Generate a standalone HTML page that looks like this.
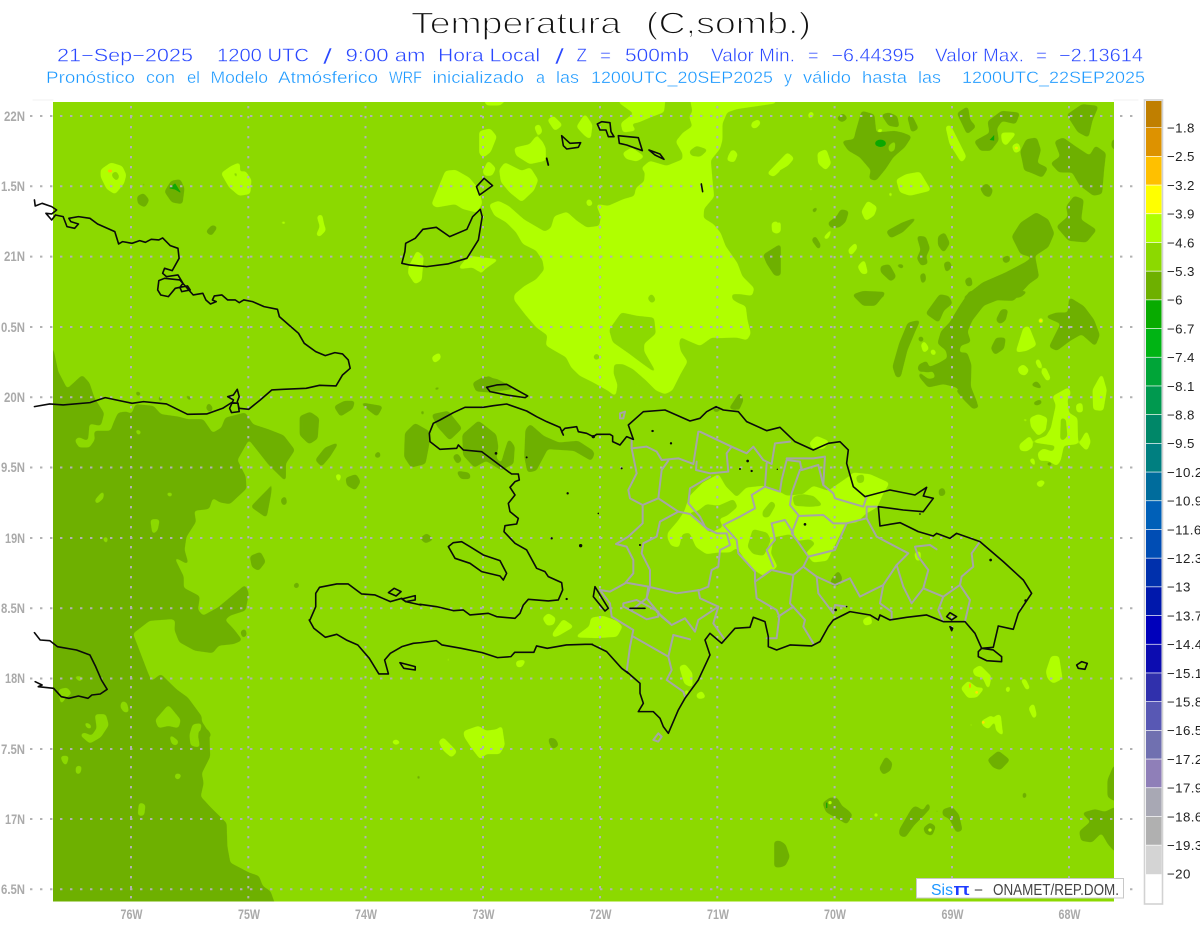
<!DOCTYPE html>
<html><head><meta charset="utf-8"><title>Temperatura</title>
<style>
html,body{margin:0;padding:0;background:#fff;width:1200px;height:927px;overflow:hidden}
svg{display:block}
path{vector-effect:non-scaling-stroke;stroke-linejoin:round;stroke-linecap:round}
.d path{fill:#6eb000;stroke:#6eb000;stroke-width:1.2}
.m path{fill:#8cd900;stroke:#8cd900;stroke-width:1.2}
.l path{fill:#b0ff00;stroke:#b0ff00;stroke-width:1.2}
.c path{fill:none;stroke:#0a0a0a;stroke-width:1.6}
.p path{fill:none;stroke:#a6a6a6;stroke-width:2}
.g path{stroke-linecap:butt}
text{font-family:"Liberation Sans",sans-serif;white-space:pre}
.t1 text{font-size:18px;fill:#2a48ff;stroke:#fff;stroke-width:.4}
.t2 text{font-size:17px;fill:#1a98ff;stroke:#fff;stroke-width:.35}
.tt text{font-size:31px;fill:#111;stroke:#fff;stroke-width:1.15}
.ax text{font-size:13.5px;fill:#aaa;font-weight:bold}
.cb text{font-size:13.3px;fill:#222;letter-spacing:.4px}
</style></head><body>
<svg width="1200" height="927" viewBox="0 0 1200 927" xmlns="http://www.w3.org/2000/svg">
<defs>
<clipPath id="mc"><rect x="53" y="102" width="1061" height="799.5"/></clipPath>
<filter id="s" filterUnits="userSpaceOnUse" x="0" y="0" width="1200" height="927" color-interpolation-filters="sRGB">
<feGaussianBlur stdDeviation="1.5"/>
<feColorMatrix type="matrix" values="1 0 0 0 0 0 1 0 0 0 0 0 1 0 0 0 0 0 7 -2.6"/>
</filter>
</defs>
<rect width="1200" height="927" fill="#fff"/>
<path d="M33 100H53M1114 100H1138" stroke="#f0f0f0" stroke-width="1"/>
<rect x="53" y="102" width="1061" height="799.5" fill="#8cd900"/>
<g clip-path="url(#mc)">

<!-- west dark -->
<g filter="url(#s)"><g class="d" transform="translate(0,300) scale(.3827 .3333)">
<path d="M120,120 139,155 150,215 175,270 215,228 232,250 245,295 270,340 262,375 232,368 228,420 205,408 192,420 205,445 235,445 250,420 248,395 290,395 300,365 310,340 330,337 345,345 355,315 400,320 420,345 465,352 490,360 530,360 555,402 580,385 590,355 640,340 660,375 700,390 740,408 768,450 745,490 745,540 705,495 650,415 618,480 640,530 642,565 600,610 575,605 555,590 545,625 505,630 510,665 485,710 480,750 490,790 450,765 478,830 478,865 520,890 515,930 530,950 570,925 640,858 648,880 640,930 600,945 585,960 610,990 630,1020 610,1030 570,1035 555,1057 510,1050 470,1025 458,990 460,960 450,955 390,960 345,1000 385,1120 395,1147 420,1125 460,1170 490,1195 525,1250 525,1265 545,1300 547,1370 525,1420 530,1450 522,1490 550,1525 590,1570 592,1640 600,1690 650,1720 675,1730 685,1760 705,1775 725,1840 120,1840z"/>
</g></g>
<!-- mid patches over dark -->
<g filter="url(#s)"><g class="m" transform="translate(0,620) scale(.3827 .3333)">
<path d="M408,300 440,258 470,300 465,322 440,315 415,322z"/>
<path d="M320,245 330,250 335,275 325,275 316,260z"/>
<path d="M250,285 275,285 282,315 262,350 235,368 212,345 220,340 240,350 255,325z"/>
<path d="M222,308 235,315 238,325 228,322z"/>
<path d="M445,347 465,365 460,375 450,370z"/>
<path d="M505,315 525,312 522,330 515,345 520,380 500,375 497,345z"/>
<path d="M160,410 178,410 172,435 165,425z"/>
<path d="M200,440 212,440 208,460 200,460z"/>
<path d="M460,462 473,465 465,478 458,472z"/>
<path d="M365,550 378,555 375,585 362,585z"/>
<path d="M155,210 175,205 185,220 170,232 160,250z"/>
<path d="M195,170 215,172 210,183z"/>
</g></g>
<g filter="url(#s)"><g class="m" transform="translate(0,300) scale(.3827 .3333)">
<path d="M250,600 270,575 268,595 252,610z"/>
<path d="M435,580 450,580 445,590z"/>
<path d="M395,660 415,660 410,690 400,700z"/>
<path d="M270,715 280,712 278,730z"/>
<path d="M355,390 368,395 362,405z"/>
</g></g>
<g filter="url(#s)"><g class="d" transform="translate(0,620) scale(.3827 .3333)">
<path d="M520,335 540,328 550,345 535,365 522,355z"/>
<path d="M630,35 640,28 643,45 635,52z"/>
<path d="M1435,355 1450,358 1458,375 1445,385 1437,370z"/>
<path d="M1090,468 1097,468 1094,480z"/>
</g></g>
<!-- central Caribbean dark blobs -->
<g filter="url(#s)"><g class="d" transform="translate(0,300) scale(.3827 .3333)">
<path d="M875,320 900,305 925,305 920,325 890,347z"/>
<path d="M945,310 998,320 985,347 965,330z"/>
<path d="M785,350 810,338 832,355 828,415 808,430 785,405z"/>
<path d="M826,480 850,445 882,430 860,470 840,497z"/>
<path d="M980,465 990,455 993,470 983,472z"/>
<path d="M905,535 930,525 940,545 928,568 908,555z"/>
<path d="M735,600 745,590 748,610 740,615z"/>
<path d="M658,620 705,565 710,550 705,590 695,650z"/>
<path d="M655,770 680,758 692,785 675,810 660,800z"/>
<path d="M768,855 778,848 780,860 772,864z"/>
<path d="M1100,715 1115,702 1130,718 1112,728z"/>
<path d="M1060,400 1085,372 1120,395 1120,430 1110,490 1075,500 1058,470z"/>
<path d="M1130,345 1170,335 1205,385 1175,418 1145,380z"/>
<path d="M1210,405 1250,365 1295,405 1300,440 1295,475 1310,495 1320,455 1330,420 1343,440 1340,490 1310,508 1270,480 1240,500 1212,465z"/>
<path d="M1185,470 1195,462 1205,480 1195,490z"/>
<path d="M1195,515 1225,520 1228,535 1205,535z"/>
<path d="M1375,390 1385,375 1420,410 1460,430 1510,425 1550,455 1545,480 1500,450 1430,445 1400,510 1380,515 1372,470z"/>
<path d="M1237,250 1265,232 1300,240 1340,265 1280,275 1245,272z"/>
<path d="M355,275 368,280 360,288z"/>
<path d="M415,295 425,285 420,305z"/>
<path d="M485,285 500,295 495,300z"/>
<path d="M545,310 555,325 548,335 540,325z"/>
<path d="M1100,335 1107,332 1105,347z"/>
<path d="M1135,265 1150,262 1140,270z"/>
</g></g>
<!-- north-west patches -->
<g filter="url(#s)"><g class="d" transform="scale(.3827 .3333)">
<path d="M432,575 448,545 470,540 480,565 475,610 450,605z"/>
<path d="M360,590 375,582 388,600 378,620 362,610z"/>
<path d="M540,695 555,677 566,682 552,705z"/>
<path d="M372,552 378,550 376,560z"/>
</g></g>
<path d="M170,188 175,184 180,192 175,189z" fill="#14a800" stroke="#14a800"/>
<g filter="url(#s)"><g class="l" transform="scale(.3827 .3333)">
<path fill-rule="evenodd" d="M265,510 290,490 318,500 328,525 322,550 300,580 280,565 265,530z M290,518 290,530 305,548 315,530 305,510z"/>
<path fill-rule="evenodd" d="M580,520 605,500 625,490 625,520 640,515 655,540 652,580 625,585 600,560z M605,515 612,530 622,545 622,515z"/>
<path d="M830,650 840,645 845,675 850,690 835,708 828,705 838,680z"/>
<path d="M733,668 745,665 745,672z"/>
<path d="M1130,612 1165,515 1190,512 1225,535 1250,570 1258,610 1245,635 1210,625 1190,610 1140,620z"/>
<path d="M1070,800 1090,755 1105,770 1100,840 1085,850 1068,820z"/>
<path d="M1200,805 1225,770 1300,780 1265,800 1255,815 1235,800z"/>
</g></g>
<ellipse cx="110" cy="171" rx="2" ry="1.5" fill="#ffc000"/>

<!-- big lime -->
<g filter="url(#s)"><g class="l" transform="translate(480,100) scale(.3333)">
<path d="M885,-15 885,8 770,25 740,35 725,70 725,120 718,145 690,180 695,240 700,290 670,325 668,355 700,375 720,400 735,440 770,490 785,530 820,565 815,585 780,580 752,580 755,600 775,612 795,620 800,660 810,700 800,718 770,710 720,712 695,710 660,735 625,720 600,708 595,730 600,755 620,785 600,820 575,870 555,880 530,870 500,840 460,805 430,790 400,790 398,820 410,855 405,885 385,870 340,845 300,825 275,800 260,770 225,750 200,735 205,705 170,680 140,645 105,600 105,585 135,560 170,540 195,510 190,480 170,450 130,430 110,395 80,365 45,345 30,315 55,305 85,320 130,360 195,398 215,385 225,350 260,338 290,365 320,385 360,380 365,350 352,315 385,320 430,300 465,290 470,265 495,245 497,215 487,205 510,185 560,200 610,180 610,160 590,125 610,100 640,80 630,50 640,35 630,-15z"/>
<path d="M420,-15 555,-15 550,35 510,50 475,65 450,70 465,90 430,95 425,70 465,40 420,8z"/>
<path d="M10,-15 90,-15 60,14 20,14z"/>
<path d="M0,95 30,88 48,110 30,155 10,170 0,160z"/>
<path d="M105,145 150,135 170,110 185,125 195,145 195,180 150,190 110,165z"/>
<path d="M165,80 178,75 185,95 175,105z"/>
<path d="M205,60 220,50 245,75 225,90z"/>
<path d="M292,80 315,45 335,75 330,115 315,105z"/>
<path d="M10,215 25,185 45,205 35,225 15,225z"/>
<path d="M60,210 75,190 125,215 150,205 172,240 160,270 125,303 90,275 65,245z"/>
<path d="M320,305 328,298 337,312 325,318z"/>
<path d="M430,160 455,145 490,170 470,182 440,175z"/>
<path d="M745,170 760,150 772,165 755,185z"/>
<path d="M815,70 835,60 840,70 825,85z"/>
<path d="M865,220 895,190 900,210 880,228z"/>
<path d="M0,478 50,480 15,505 0,520z"/>
<path d="M880,385 900,365 900,395 885,400z"/>
</g></g>
<g filter="url(#s)"><g class="m" transform="translate(480,100) scale(.3333)">
<path d="M390,690 425,640 470,650 520,655 525,700 490,730 490,755 510,790 525,815 490,790 450,760 400,725z"/>
<path d="M630,155 650,140 680,150 660,168 635,165z"/>
<path d="M505,595 515,583 525,600 515,608z"/>
<path d="M342,768 352,762 358,775 345,778z"/>
<path d="M455,855 470,842 490,865 480,882 462,875z"/>
</g></g>
<g filter="url(#s)"><g class="d" transform="translate(480,100) scale(.3333)">
<path d="M852,465 900,435 900,525 885,525 862,490z"/>
<path d="M0,845 25,830 60,850 20,870 0,870z"/>
<path d="M750,925 780,880 788,900 770,928z"/>
</g></g>

<!-- north-east -->
<g filter="url(#s)"><g class="l" transform="translate(600,0) scale(.3827 .3333)">
<path d="M333,480 345,450 357,465 350,485z"/>
<path d="M440,520 490,460 505,475 490,495 445,525z"/>
<path d="M570,460 590,450 602,490 590,508 572,490z"/>
<path d="M545,345 552,335 558,345 548,355z"/>
<path d="M395,375 413,360 415,372 402,385z"/>
<path d="M776,540 800,525 835,518 862,570 810,585 785,575z"/>
<path d="M685,635 700,605 722,622 715,645 695,660z"/>
<path d="M905,380 915,378 955,470 945,485 915,430z"/>
<path d="M450,670 462,665 470,695 452,697z"/>
<path d="M585,715 605,688 595,715z"/>
<path d="M650,750 668,730 670,745 655,765z"/>
<path d="M675,800 690,782 698,820 685,820z"/>
<path d="M725,390 740,388 730,398z"/>
<path d="M755,580 762,578 760,592z"/>
<path d="M545,565 560,568 548,570z"/>
</g></g>
<g filter="url(#s)"><g class="d" transform="translate(600,0) scale(.3827 .3333)">
<path d="M635,425 665,420 670,395 685,335 715,345 720,400 770,395 790,400 812,410 795,440 765,470 745,505 720,540 705,535 710,510 680,470 650,450z"/>
<path d="M755,340 775,350 780,380 755,375 738,345z"/>
<path d="M805,350 815,350 830,385 815,395z"/>
<path d="M620,355 635,342 645,355 632,365z"/>
<path d="M935,340 960,322 965,360 980,380 960,400z"/>
<path d="M980,425 1020,400 1015,365 1050,335 1095,340 1085,370 1050,360 1035,385 1040,420 1020,450 995,450z"/>
<path d="M1100,455 1115,420 1140,415 1150,450 1140,490 1168,505 1155,530 1125,515 1110,510 1105,480z"/>
<path d="M1180,490 1205,470 1190,425 1210,415 1240,440 1280,470 1295,440 1320,460 1315,510 1310,580 1290,585 1255,555 1235,515 1200,515z"/>
<path d="M1222,345 1260,315 1300,320 1285,360 1275,410 1250,395z"/>
<path d="M1340,420 1360,425 1360,460 1338,440z"/>
<path d="M995,565 1010,552 1025,570 1018,590 1005,585z"/>
<path d="M1220,620 1240,590 1262,600 1255,660 1295,690 1270,725 1225,720 1195,680 1225,650z"/>
<path d="M1078,710 1100,670 1140,640 1170,660 1185,700 1170,740 1130,770 1100,760z"/>
<path d="M950,895 1000,850 1060,820 1110,790 1135,770 1145,830 1120,850 1080,900z"/>
<path d="M885,710 900,700 912,730 898,755 885,735z"/>
<path d="M830,710 850,712 860,745 850,770 855,790 840,795 830,775 840,750z"/>
<path d="M735,800 755,795 772,830 760,842 735,815z"/>
<path d="M775,795 792,795 790,805z"/>
<path d="M900,790 912,785 918,800 905,815z"/>
<path d="M838,825 848,820 850,840 842,850z"/>
<path d="M955,840 968,832 972,855 960,858z"/>
<path d="M1052,775 1068,768 1070,782 1058,788z"/>
<path d="M750,695 790,670 825,655 790,695 760,712z"/>
<path d="M555,720 562,710 575,735 572,747z"/>
<path d="M597,670 620,650 630,630 648,635 640,665 625,680 605,682z"/>
<path d="M555,630 568,622 560,638z"/>
<path d="M665,890 700,880 745,885 720,900z"/>
</g></g>
<g filter="url(#s)"><g class="m" transform="translate(600,0) scale(.3827 .3333)"><path d="M755,440 770,425 768,450 758,455z"/></g></g>
<g filter="url(#s)"><g class="l" transform="translate(600,0) scale(.3827 .3333)">
<path d="M1050,400 1085,400 1060,435 1052,425z"/>
<path d="M1078,438 1092,430 1098,450 1085,458z"/>
</g></g>
<g transform="translate(600,0) scale(.3827 .3333)">
<ellipse cx="733" cy="430" rx="14" ry="11" fill="#0ca800"/>
<path d="M1018,420 1030,405 1030,422z" fill="#0ca800"/>
<circle cx="1088" cy="444" r="4" fill="#e6f000"/>
</g>

<!-- east / Mona passage zoom -->
<g filter="url(#s)"><g class="d" transform="translate(800,290) scale(.3333)">
<path d="M160,15 190,5 255,8 225,45 190,45z"/>
<path d="M380,70 420,15 445,20 455,40 430,60 415,95z"/>
<path d="M415,160 425,125 450,100 480,50 510,5 680,5 660,20 600,25 550,45 515,90 500,125 510,155 480,165 475,190 500,190 512,225 510,290 530,340 530,355 500,325 470,290 430,280 385,290 360,260 358,250 385,270 410,265 400,240 385,245 355,240 358,225 380,215 385,235 420,220 445,205 440,180z"/>
<path d="M280,230 300,160 325,100 358,92 345,120 320,180 300,260 290,260z"/>
<path d="M590,90 605,60 622,60 615,90 600,100z"/>
<path d="M575,175 590,145 615,145 610,175 585,192z"/>
<path d="M355,145 365,140 370,150 362,155z"/>
<path d="M740,80 770,70 805,70 810,25 850,50 880,90 897,135 885,165 845,130 810,150 770,180 750,170 770,130 785,100z"/>
<path d="M695,285 710,275 725,295 710,290z"/>
<path d="M700,340 720,330 725,338 710,345z"/>
<path d="M740,520 755,518 750,528z"/>
<path d="M418,605 430,597 435,612 422,618z"/>
</g></g>
<g filter="url(#s)"><g class="l" transform="translate(800,290) scale(.3333)">
<path d="M650,185 672,115 685,110 707,165 680,180z"/>
<path d="M365,165 372,155 385,175 372,187z"/>
<path d="M392,185 400,178 407,190 400,195z"/>
<path d="M655,235 670,225 685,240 675,255 660,250z"/>
<path d="M708,215 715,207 725,230 718,235z"/>
<path d="M725,245 735,233 750,265 742,272z"/>
<path d="M880,300 905,255 918,300 908,360 882,358z"/>
<path d="M830,345 845,340 847,365 832,365z"/>
<path d="M692,385 715,375 740,385 735,420 715,435 695,410z"/>
<path fill-rule="evenodd" d="M760,320 805,295 810,310 800,330 805,370 830,385 832,460 790,465 780,510 770,525 745,510 720,510 715,490 730,478 760,488 770,465 700,455 740,440 755,415 770,345z M780,380 778,450 790,455 805,440 800,385z"/>
<path d="M660,465 690,440 697,470 680,482 662,480z"/>
<path d="M840,460 860,425 870,455 860,480z"/>
<path d="M690,510 700,505 705,528z"/>
<path d="M710,580 725,572 735,578 718,590z"/>
<path d="M668,388 680,388 680,395z"/>
<path d="M716,92 722,84 730,92 722,100z"/>
</g></g>
<circle cx="1040.7" cy="320.7" r="1.3" fill="#ffe600"/>

<!-- south-east -->
<g filter="url(#s)"><g class="l" transform="translate(780,640) scale(.3333)">
<path d="M545,145 565,125 590,145 610,145 590,170 565,172z"/>
<path d="M580,90 600,78 632,110 625,145 610,112 585,105z"/>
<path d="M725,120 735,118 748,145 740,148z"/>
<path d="M678,145 688,140 688,150 683,158z"/>
<path d="M748,205 760,192 768,225 762,235z"/>
<path d="M605,245 635,228 640,245 625,265 610,255z"/>
<path d="M645,230 660,225 665,270 668,285 650,270z"/>
<path d="M800,95 815,50 835,50 845,115 820,128 805,115z"/>
<path d="M570,252 575,250 575,262z"/>
</g></g>
<circle cx="876" cy="815" r="1.6" fill="#b0ff00"/>
<g filter="url(#s)"><g class="d" transform="translate(780,640) scale(.3333)">
<path d="M300,385 318,352 335,370 330,390 310,402z"/>
<path d="M625,360 655,335 687,360 660,388 640,380z"/>
<path d="M730,460 736,458 738,470 730,475z"/>
<path fill-rule="evenodd" d="M130,490 150,475 170,475 185,500 200,510 215,525 200,550 175,535 140,515z M150,485 155,500 165,505 168,490z"/>
<path d="M360,570 395,510 405,500 415,505 430,515 445,490 448,505 430,525 400,555 375,590 360,585z"/>
<path d="M490,510 515,502 535,525 545,570 530,575 510,535 490,525z"/>
<path d="M432,565 450,550 465,560 455,585 438,580z"/>
<path d="M467,512 473,510 473,520z"/>
<path d="M1002,380 985,420 985,470 1002,480 1040,480 1040,380z"/>
<path d="M910,520 945,510 975,518 1002,505 1040,505 1040,640 1002,630 985,610 965,575 935,605 905,600 900,575 935,545z"/>
<path d="M-15,605 0,605 15,615 27,650 15,675 0,680 -15,680z"/>
</g></g>
<g transform="translate(780,640) scale(.3333)">
<circle cx="450" cy="570" r="5" fill="#b0ff00"/>
<circle cx="150" cy="488" r="5" fill="#b0ff00"/>
<path d="M138,488 142,488 142,504 138,504z" fill="#14a800"/>
<ellipse cx="570" cy="137" rx="3" ry="7" fill="#ffb000"/>
<circle cx="590" cy="157" r="4" fill="#ffe000"/>
<circle cx="610" cy="247" r="4" fill="#ffe000"/>
</g>

<!-- Dominican lime -->
<g filter="url(#s)"><g class="l" transform="translate(590,390) scale(.3333)">
<path d="M235,430 265,395 285,365 300,320 340,280 385,255 405,290 440,325 470,295 520,290 555,300 590,320 640,315 670,290 715,305 780,260 790,250 840,255 895,280 875,315 860,350 825,370 800,395 765,400 745,440 725,480 710,510 670,515 650,490 680,460 660,445 625,450 600,430 550,440 540,490 560,530 520,555 480,530 455,490 440,470 420,485 385,485 350,490 320,470 300,425 275,430 265,470 245,465 235,445z"/>
<path d="M660,160 680,140 715,155 700,175 670,175z"/>
<path d="M270,830 285,825 305,850 305,890 285,880z"/>
<path d="M320,915 335,905 345,922 325,925z"/>
<path d="M820,690 840,680 845,700 825,705z"/>
<path d="M285,905 295,900 290,918z"/>
<path d="M975,490 990,485 990,510 980,510z"/>
<path d="M1340,285 1362,275 1355,290z"/>
</g></g>
<g filter="url(#s)"><g class="m" transform="translate(590,390) scale(.3333)">
<path d="M300,370 325,365 350,345 385,350 430,330 440,350 410,375 385,385 395,410 360,425 330,395z"/>
<path d="M520,365 545,335 555,345 535,380 520,380z"/>
<path d="M475,470 490,420 530,430 540,450 520,495 490,490z"/>
<path d="M640,315 670,320 695,345 660,348 615,345 610,320z"/>
<path d="M800,260 820,255 820,275 805,278z"/>
</g></g>
<g filter="url(#s)"><g class="d" transform="translate(590,390) scale(.3333)">
<path d="M430,45 450,10 458,30 445,60z"/>
<path d="M370,55 385,50 390,60 375,65z"/>
<path d="M725,570 745,545 755,565 745,585 725,585z"/>
<path d="M1100,0 1130,0 1165,50 1150,55 1125,30z"/>
<path d="M0,190 12,185 5,210z"/>
<path d="M1048,300 1060,295 1065,310 1050,318z"/>
</g></g>
<g filter="url(#s)"><g class="l" transform="translate(420,400) scale(.3333)">
<path d="M370,655 385,642 405,655 400,672 382,675z"/>
<path d="M400,700 430,660 458,680 415,705 400,710z"/>
<path d="M470,710 510,680 515,655 550,650 590,665 605,680 590,708 530,712z"/>
<path d="M290,785 315,782 300,800 292,800z"/>
<path d="M83,775 87,772 85,790z"/>
</g></g>
<!-- southern lime -->
<g filter="url(#s)"><g class="l" transform="translate(0,620) scale(.3827 .3333)">
<path d="M1213,335 1250,320 1270,335 1300,330 1310,320 1317,375 1305,400 1270,400 1255,415 1235,385 1215,350z"/>
<path d="M1148,365 1158,355 1192,395 1180,410 1160,390z"/>
<path d="M1025,365 1035,360 1045,368 1033,373z"/>
<path d="M1350,125 1372,122 1362,140 1352,138z"/>
</g></g>
<g filter="url(#s)"><g class="l" transform="translate(0,300) scale(.3827 .3333)">
<path d="M1130,172 1148,160 1150,175 1135,187z"/>
<path d="M878,525 890,525 885,545z"/>
</g></g>
</g>

<!-- grid -->
<g class="g" fill="none" stroke="#b2b2b2" stroke-width="2" stroke-dasharray="2.4 7.6">
<path d="M30 116H1140M30 186.3H1140M30 256.6H1140M30 327H1140M30 397.2H1140M30 467.5H1140M30 538H1140M30 608.2H1140M30 678.5H1140M30 749H1140M30 819H1140M30 889.2H1140"/>
<path d="M131 106V905M248.3 106V905M365.5 106V905M483 106V905M600 106V905M717.3 106V905M834.6 106V905M952 106V905M1069 106V905"/>
</g>

<!-- provinces -->
<g class="p" transform="translate(590,390) scale(.3333)">
<path d="M125,150 125,175 140,250 115,300 120,325 158,345 158,400 115,440 78,462 110,470 130,510 130,550 105,580 60,605 30,600"/>
<path d="M30,600 60,640 65,680 130,720 120,770 110,845"/>
<path d="M125,175 170,170 200,185 215,210 265,205 310,222 325,125"/>
<path d="M330,125 425,170 470,190 490,170 520,210 545,222 555,160 600,155"/>
<path d="M235,212 215,240 205,325 158,345"/>
<path d="M205,325 265,365 300,372 350,415 380,430 410,430 420,465 390,480 385,530 365,540 355,590 330,600 260,610 175,590 108,578"/>
<path d="M320,215 318,240 360,250 415,245 410,190 425,170"/>
<path d="M360,260 300,295 295,340 330,380 345,410 355,420"/>
<path d="M265,365 210,395 200,440 160,460 155,490 180,540 180,590 170,625 125,660"/>
<path d="M530,220 525,290 485,315 495,355 450,380 400,405 440,450 445,490 495,545 495,575 545,540 610,555 640,530 655,500 620,450 605,430 625,378 700,375 730,400 770,400 830,385 830,350 860,350"/>
<path d="M495,575 500,625 560,660 568,680 560,745 530,745"/>
<path d="M525,290 570,305 575,270 590,210 630,215 635,240 685,225 700,285 730,310 735,325 820,350 830,320"/>
<path d="M630,240 605,310 600,345 625,375"/>
<path d="M700,285 705,200 670,205 590,205"/>
<path d="M545,400 585,390 610,430"/>
<path d="M545,400 555,450 530,480 550,530"/>
<path d="M655,500 735,480 770,400"/>
<path d="M640,530 680,560 735,585 780,565 810,620 880,585 870,640 905,665 905,690"/>
<path d="M610,555 600,640 645,690 640,710 670,760"/>
<path d="M610,650 565,680"/>
<path d="M680,560 685,610 730,670 735,645 770,650"/>
<path d="M830,385 860,440 955,490 920,525 880,585"/>
<path d="M920,525 940,590 965,640 1000,595 1015,540 985,500 975,470 1020,465 1040,478"/>
<path d="M1000,595 1060,620 1045,660 1060,695"/>
<path d="M1060,620 1110,585 1140,630 1125,695"/>
<path d="M1110,585 1115,560 1150,530 1145,490 1170,455"/>
<path d="M175,590 170,625 215,680 245,705 285,685 315,725 325,690 385,650 330,625 325,600"/>
<path d="M385,650 370,700 405,750"/>
<path d="M250,735 300,748"/>
<path d="M250,735 235,800 245,840 230,870 280,905 285,920"/>
<path d="M130,740 235,800"/>
<path d="M200,665 240,700"/>
<path d="M100,640 140,630 205,665 205,680 170,688 120,660 100,650z"/>
<path d="M190,1050 205,1030 215,1040 205,1055z"/>
<path d="M90,70 105,65 100,85 90,85z"/>
</g>

<!-- coast -->
<g class="c">
<g transform="scale(.3827 .3333)">
<path d="M90,600 92,618 110,610 135,620 148,630 135,642 120,640 135,660 145,645 165,650 175,680 195,685 205,672 185,665 180,655 205,650 235,655 255,672 300,695 310,732 320,725 345,730 365,722 380,727 395,718 415,720 425,714 445,737 465,745 468,775 450,812 430,805 425,820 435,830 465,825 478,850 470,862 490,858 497,870 475,875 470,862 458,865 440,890 420,885 412,870 415,842 430,835 470,840 505,885 530,880 538,900 550,912 565,905 555,900 560,888 580,885 595,900 615,900 625,908 637,900 660,905 690,920 725,928 730,950 755,975 780,1000 795,1030 825,1055 850,1067 875,1058 895,1062 910,1080 915,1105 895,1125 878,1158 835,1156 800,1165 740,1168 710,1170 680,1200 650,1228 625,1225 620,1205 625,1190 620,1168 610,1185 595,1190 610,1200 600,1225 605,1238 625,1235 622,1210 605,1208 582,1225 540,1242 490,1243 435,1212 375,1205 345,1210 275,1193 235,1208 165,1215 130,1212 90,1220"/>
<path d="M1050,790 1058,755 1060,730 1085,715 1105,688 1140,682 1175,710 1220,688 1235,650 1255,628 1260,650 1250,720 1220,775 1170,792 1115,800 1070,795z"/>
<path d="M1245,560 1265,535 1287,557 1253,585z"/>
</g>
<g transform="translate(480,100) scale(.3333)">
<path d="M245,107 270,130 302,128 295,142 260,147 250,137z"/>
<path d="M200,175 205,195" style="stroke-width:1.8"/>
<path d="M352,72 365,65 390,68 393,95 402,110 385,110 378,90 360,90z"/>
<path d="M415,107 475,113 487,152 440,135 418,130z"/>
<path d="M507,150 540,162 552,178 525,165z"/>
<path d="M664,252 668,275"/>
<path d="M20,862 50,855 80,853 110,870 143,888 135,893 80,885 30,875z"/>
</g>
<g transform="translate(420,400) scale(.3333)">
<path d="M640,118 620,110 600,135 578,125 578,108 570,103 530,103 520,110 500,100 475,95 470,80 435,85 425,95 430,105 420,82 380,65 350,50 320,33 260,12 220,17 190,22 135,22 100,38 60,60 40,70 28,100 30,125 60,148 110,145 115,135 130,150 185,155 225,185 265,215 275,222 295,222 298,240 285,245 270,262 285,285 265,310 270,335 295,355 290,372 255,377 252,395 285,430 320,450 350,505 375,515 385,530 425,548 428,570 415,600 385,603 325,598 310,615 300,640 285,655 230,650 205,640 150,645 130,630 100,632 50,620 0,613"/>
<path d="M85,440 100,428 125,425 150,440 190,465 240,482 260,520 250,540 240,528 185,515 150,490 105,475z"/>
<path d="M515,733 560,755 605,805 625,820"/>
<path d="M525,560 565,625 555,633 520,590z"/>
</g>
<g transform="translate(0,300) scale(.3827 .3333)">
<path d="M1100,915 1060,905 1050,895 1020,905 980,885 945,882 910,852 880,852 835,862 825,880 825,920 810,960 808,960 820,985 850,1012 880,1003 905,1020 935,1035 965,1075 990,1122 1015,1122 1005,1080 1020,1060 1050,1040 1080,1030 1100,1028 1140,1022 1155,1035 1205,1045 1260,1058 1300,1073 1335,1070 1345,1057 1395,1057 1402,1038 1430,1045 1480,1035 1530,1033 1548,1033"/>
<path d="M1015,878 1030,865 1048,875 1035,888z"/>
<path d="M1050,897 1085,887 1085,900 1060,905z"/>
</g>
<g transform="translate(0,620) scale(.3827 .3333)">
<path d="M90,38 105,60 130,62 150,80 200,90 235,105 250,140 265,180 280,208 262,222 240,225 230,235 205,228 180,235 160,230 140,205 100,200 110,195 92,185"/>
<path d="M1045,128 1085,140 1085,150 1055,145z"/>
</g>
<g transform="translate(590,390) scale(.3333)">
<path d="M110,845 150,880 150,910 160,940 145,965 190,965 210,985 220,1010 235,1030 265,960 285,925 325,870 360,795 345,750 360,730 395,760 435,715 480,712 490,682 525,695 535,740 535,770 560,780 600,765 665,768 690,755 715,710 730,690 780,665 840,675 865,690 870,675 900,690 950,682 1010,675 1060,695 1125,695 1155,730 1175,775 1210,772 1225,708 1270,718 1285,670 1325,610 1300,570 1240,515 1170,455 1100,430 1080,445 1040,430 1030,438 985,425 930,398 870,408 865,350 940,360 1000,365 1030,325 1000,318 1010,292 975,315 900,300 825,320 790,290 770,220 775,180 750,155 715,160 670,180 615,155 570,112 530,122 470,95 445,65 400,60 378,50 350,65 330,85 300,93 225,60 160,65 115,105 130,148"/>
<path d="M1165,785 1175,775 1210,780 1235,800 1235,815 1190,812 1165,800z"/>
<path d="M1070,680 1080,668 1100,680 1085,690z"/>
<path d="M1080,710 1088,715 1085,722z"/>
<path d="M120,655 165,655"/>
</g>
<g transform="translate(780,640) scale(.3333)">
<path d="M890,75 905,65 922,70 915,88 895,85z"/>
</g>
</g>
<g fill="#0a0a0a" transform="translate(420,400) scale(.3333)">
<circle cx="228" cy="160" r="4"/><circle cx="320" cy="172" r="3"/><circle cx="443" cy="280" r="3.5"/><circle cx="395" cy="415" r="3.5"/><circle cx="482" cy="437" r="5"/><circle cx="440" cy="597" r="3.5"/><circle cx="605" cy="205" r="3"/><circle cx="697" cy="93" r="3"/><circle cx="535" cy="340" r="2"/><circle cx="660" cy="435" r="3"/><circle cx="520" cy="110" r="5"/>
</g>
<g fill="#0a0a0a" transform="translate(590,390) scale(.3333)">
<circle cx="188" cy="123" r="3.5"/><circle cx="243" cy="160" r="3.5"/><circle cx="473" cy="213" r="4"/><circle cx="450" cy="237" r="3"/><circle cx="485" cy="243" r="3.5"/><circle cx="562" cy="238" r="2"/><circle cx="645" cy="403" r="4"/><circle cx="1202" cy="510" r="4"/><circle cx="1307" cy="632" r="4"/><circle cx="737" cy="660" r="4"/><circle cx="990" cy="372" r="2.5"/><circle cx="770" cy="650" r="2.5"/><circle cx="150" cy="465" r="2.5"/><circle cx="25" cy="371" r="2"/>
</g>

<!-- logo -->
<rect x="916.5" y="878.5" width="207" height="19.5" fill="#fff" stroke="#c8c8c8" stroke-width="1"/>
<text x="931" y="895" font-size="15.5" fill="#1e96ff" textLength="22" lengthAdjust="spacingAndGlyphs">Sis</text>
<text x="953" y="895" fill="#1e3cff" textLength="17" lengthAdjust="spacingAndGlyphs" style="font-family:'DejaVu Sans',sans-serif;font-size:16px">π</text>
<text x="974" y="895" font-size="15" fill="#444" textLength="9" lengthAdjust="spacingAndGlyphs">−</text>
<text x="993" y="895" font-size="16" fill="#444" textLength="126" lengthAdjust="spacingAndGlyphs">ONAMET/REP.DOM.</text>

<!-- axis labels -->
<g class="ax">
<text x="4" y="121" textLength="21" lengthAdjust="spacingAndGlyphs">22N</text>
<text x="1" y="191" textLength="24" lengthAdjust="spacingAndGlyphs">1.5N</text>
<text x="4" y="261" textLength="21" lengthAdjust="spacingAndGlyphs">21N</text>
<text x="1" y="332" textLength="24" lengthAdjust="spacingAndGlyphs">0.5N</text>
<text x="4" y="402" textLength="21" lengthAdjust="spacingAndGlyphs">20N</text>
<text x="1" y="472" textLength="24" lengthAdjust="spacingAndGlyphs">9.5N</text>
<text x="5" y="543" textLength="20" lengthAdjust="spacingAndGlyphs">19N</text>
<text x="1" y="613" textLength="24" lengthAdjust="spacingAndGlyphs">8.5N</text>
<text x="5" y="683" textLength="20" lengthAdjust="spacingAndGlyphs">18N</text>
<text x="1" y="754" textLength="24" lengthAdjust="spacingAndGlyphs">7.5N</text>
<text x="5" y="824" textLength="20" lengthAdjust="spacingAndGlyphs">17N</text>
<text x="1" y="894" textLength="24" lengthAdjust="spacingAndGlyphs">6.5N</text>
<text x="120.5" y="919" textLength="22" lengthAdjust="spacingAndGlyphs">76W</text>
<text x="238" y="919" textLength="22" lengthAdjust="spacingAndGlyphs">75W</text>
<text x="355" y="919" textLength="22" lengthAdjust="spacingAndGlyphs">74W</text>
<text x="472.5" y="919" textLength="22" lengthAdjust="spacingAndGlyphs">73W</text>
<text x="589.5" y="919" textLength="22" lengthAdjust="spacingAndGlyphs">72W</text>
<text x="707" y="919" textLength="22" lengthAdjust="spacingAndGlyphs">71W</text>
<text x="824" y="919" textLength="22" lengthAdjust="spacingAndGlyphs">70W</text>
<text x="941.5" y="919" textLength="22" lengthAdjust="spacingAndGlyphs">69W</text>
<text x="1058.5" y="919" textLength="22" lengthAdjust="spacingAndGlyphs">68W</text>
</g>

<!-- colorbar -->
<rect x="1144.5" y="100" width="18" height="804" fill="#fff" stroke="#d2d2d2" stroke-width="1.6"/>
<g>
<rect x="1146" y="101" width="15.5" height="26.4" fill="#c07f00"/>
<rect x="1146" y="128" width="15.5" height="28" fill="#dd9200"/>
<rect x="1146" y="156.7" width="15.5" height="28" fill="#ffc000"/>
<rect x="1146" y="185.4" width="15.5" height="28" fill="#ffff00"/>
<rect x="1146" y="214.1" width="15.5" height="28" fill="#b0ff00"/>
<rect x="1146" y="242.8" width="15.5" height="28" fill="#8cd900"/>
<rect x="1146" y="271.5" width="15.5" height="28" fill="#6eb000"/>
<rect x="1146" y="300.2" width="15.5" height="28" fill="#08ab00"/>
<rect x="1146" y="328.9" width="15.5" height="28" fill="#00b414"/>
<rect x="1146" y="357.6" width="15.5" height="28" fill="#00a538"/>
<rect x="1146" y="386.3" width="15.5" height="28" fill="#00994f"/>
<rect x="1146" y="415" width="15.5" height="28" fill="#008768"/>
<rect x="1146" y="443.7" width="15.5" height="28" fill="#007f80"/>
<rect x="1146" y="472.4" width="15.5" height="28" fill="#006c9c"/>
<rect x="1146" y="501.1" width="15.5" height="28" fill="#0060b8"/>
<rect x="1146" y="529.8" width="15.5" height="28" fill="#004db4"/>
<rect x="1146" y="558.5" width="15.5" height="28" fill="#0030ac"/>
<rect x="1146" y="587.2" width="15.5" height="28" fill="#0018ac"/>
<rect x="1146" y="615.9" width="15.5" height="28" fill="#0000bb"/>
<rect x="1146" y="644.6" width="15.5" height="28" fill="#0c0cb0"/>
<rect x="1146" y="673.3" width="15.5" height="28" fill="#3030ac"/>
<rect x="1146" y="702" width="15.5" height="28" fill="#5858b4"/>
<rect x="1146" y="730.7" width="15.5" height="28" fill="#7070b0"/>
<rect x="1146" y="759.4" width="15.5" height="28" fill="#8f7fb8"/>
<rect x="1146" y="788.1" width="15.5" height="28" fill="#a8a8b4"/>
<rect x="1146" y="816.8" width="15.5" height="28" fill="#b0b0b0"/>
<rect x="1146" y="845.5" width="15.5" height="28.7" fill="#d4d4d4"/>
</g>
<g class="cb">
<text x="1167" y="132.5">−1.8</text>
<text x="1167" y="161.2">−2.5</text>
<text x="1167" y="189.9">−3.2</text>
<text x="1167" y="218.6">−3.9</text>
<text x="1167" y="247.3">−4.6</text>
<text x="1167" y="276">−5.3</text>
<text x="1167" y="304.7">−6</text>
<text x="1167" y="333.4">−6.7</text>
<text x="1167" y="362.1">−7.4</text>
<text x="1167" y="390.8">−8.1</text>
<text x="1167" y="419.5">−8.8</text>
<text x="1167" y="448.2">−9.5</text>
<text x="1167" y="476.9">−10.2</text>
<text x="1167" y="505.6">−10.9</text>
<text x="1167" y="534.3">−11.6</text>
<text x="1167" y="563">−12.3</text>
<text x="1167" y="591.7">−13</text>
<text x="1167" y="620.4">−13.7</text>
<text x="1167" y="649.1">−14.4</text>
<text x="1167" y="677.8">−15.1</text>
<text x="1167" y="706.5">−15.8</text>
<text x="1167" y="735.2">−16.5</text>
<text x="1167" y="763.9">−17.2</text>
<text x="1167" y="792.6">−17.9</text>
<text x="1167" y="821.3">−18.6</text>
<text x="1167" y="850">−19.3</text>
<text x="1167" y="878.7">−20</text>
</g>

<!-- titles -->
<g class="tt">
<text x="411" y="33.5" textLength="210" lengthAdjust="spacingAndGlyphs">Temperatura</text>
<text x="646" y="33.5" textLength="165" lengthAdjust="spacingAndGlyphs">(C,somb.)</text>
</g>
<g class="t1">
<text x="57" y="61.5" textLength="136" lengthAdjust="spacingAndGlyphs">21−Sep−2025</text>
<text x="217" y="61.5" textLength="92" lengthAdjust="spacingAndGlyphs">1200 UTC</text>
<text x="323" y="64" textLength="9" lengthAdjust="spacingAndGlyphs" style="font-size:22px">/</text>
<text x="345.5" y="61.5" textLength="80" lengthAdjust="spacingAndGlyphs">9:00 am</text>
<text x="438" y="61.5" textLength="102" lengthAdjust="spacingAndGlyphs">Hora Local</text>
<text x="555" y="64" textLength="9" lengthAdjust="spacingAndGlyphs" style="font-size:22px">/</text>
<text x="576.5" y="61.5" textLength="10.5" lengthAdjust="spacingAndGlyphs">Z</text>
<text x="600" y="61.5" textLength="11" lengthAdjust="spacingAndGlyphs">=</text>
<text x="625" y="61.5" textLength="64" lengthAdjust="spacingAndGlyphs">500mb</text>
<text x="711" y="61.5" textLength="84" lengthAdjust="spacingAndGlyphs">Valor Min.</text>
<text x="808" y="61.5" textLength="10.5" lengthAdjust="spacingAndGlyphs">=</text>
<text x="831.5" y="61.5" textLength="83" lengthAdjust="spacingAndGlyphs">−6.44395</text>
<text x="935" y="61.5" textLength="89" lengthAdjust="spacingAndGlyphs">Valor Max.</text>
<text x="1036" y="61.5" textLength="11" lengthAdjust="spacingAndGlyphs">=</text>
<text x="1059" y="61.5" textLength="84" lengthAdjust="spacingAndGlyphs">−2.13614</text>
</g>
<g class="t2">
<text x="46" y="83" textLength="89" lengthAdjust="spacingAndGlyphs">Pronóstico</text>
<text x="146" y="83" textLength="29" lengthAdjust="spacingAndGlyphs">con</text>
<text x="187" y="83" textLength="13" lengthAdjust="spacingAndGlyphs">el</text>
<text x="210.5" y="83" textLength="57.5" lengthAdjust="spacingAndGlyphs">Modelo</text>
<text x="278" y="83" textLength="100" lengthAdjust="spacingAndGlyphs">Atmósferico</text>
<text x="389" y="83" textLength="33" lengthAdjust="spacingAndGlyphs">WRF</text>
<text x="432.5" y="83" textLength="91.5" lengthAdjust="spacingAndGlyphs">inicializado</text>
<text x="536" y="83" textLength="9" lengthAdjust="spacingAndGlyphs">a</text>
<text x="556" y="83" textLength="23" lengthAdjust="spacingAndGlyphs">las</text>
<text x="591" y="83" textLength="182" lengthAdjust="spacingAndGlyphs">1200UTC_20SEP2025</text>
<text x="784" y="83" textLength="8" lengthAdjust="spacingAndGlyphs">y</text>
<text x="803" y="83" textLength="48" lengthAdjust="spacingAndGlyphs">válido</text>
<text x="862" y="83" textLength="45" lengthAdjust="spacingAndGlyphs">hasta</text>
<text x="918" y="83" textLength="23" lengthAdjust="spacingAndGlyphs">las</text>
<text x="962" y="83" textLength="183" lengthAdjust="spacingAndGlyphs">1200UTC_22SEP2025</text>
</g>
</svg>
</body></html>
